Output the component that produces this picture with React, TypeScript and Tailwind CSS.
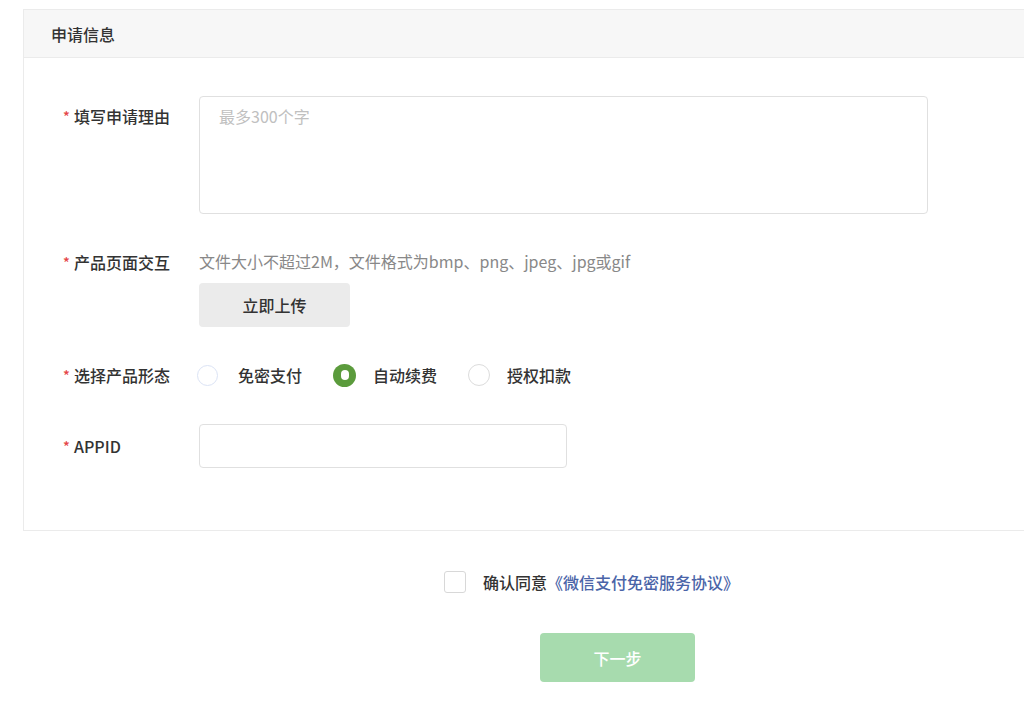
export default function App() {
  const font = { fontFamily: '"PingFang SC","Noto Sans CJK SC",sans-serif' };
  const Label = ({ t, top = 0 }: { t: string; top?: number }) => (
    <div className={`w-[175px] flex items-start text-[16px] text-[#333] leading-[24px] font-medium ${top ? "mt-[8px]" : ""}`}>
      <span className="text-[#e54545] w-[11px] pl-[39px] box-content text-[14px]">*</span>
      <span>{t}</span>
    </div>
  );
  return (
    <div className="w-[1024px] h-[702px] overflow-hidden bg-white" style={font}>
      <div className="ml-[23px] mt-[9px] w-[1020px] border border-[#ebebeb] h-[522px]">
        <div className="h-[48px] bg-[#f7f7f7] border-b border-[#ebebeb] flex items-center pl-[27px] text-[16px] text-[#333] font-medium">申请信息</div>
        <div className="flex pt-[38px] items-start">
          <Label t="填写申请理由" top={1} />
          <div className="w-[729px] h-[118px] border border-[#e0e0e0] rounded-[4px] px-[19px] pt-[7px] text-[16px] text-[#c0c0c0]">最多300个字</div>
        </div>
        <div className="flex pt-[36px] items-start">
          <Label t="产品页面交互" />
          <div>
            <div className="text-[16px] text-[#888] leading-[24px] -mt-[1px]">文件大小不超过2M，文件格式为bmp、png、jpeg、jpg或gif</div>
            <div className="mt-[10px] w-[151px] h-[44px] bg-[#ebebeb] rounded-[4px] flex items-center justify-center text-[16px] text-[#333] font-medium">立即上传</div>
          </div>
        </div>
        <div className="flex pt-[36px] items-center h-[60px]">
          <Label t="选择产品形态" />
          <div className="flex items-center text-[16px] text-[#333] font-medium">
            <span className="w-[21px] h-[21px] rounded-full border border-[#dbe3f5] -ml-[2px]"></span>
            <span className="ml-[20px]">免密支付</span>
            <span className="ml-[31px] w-[23px] h-[23px] rounded-full bg-[#5b9b3c] flex items-center justify-center"><span className="w-[8px] h-[10px] rounded-full bg-white"></span></span>
            <span className="ml-[17px]">自动续费</span>
            <span className="ml-[31px] w-[22px] h-[22px] rounded-full border border-[#dcdcdc]"></span>
            <span className="ml-[17px]">授权扣款</span>
          </div>
        </div>
        <div className="flex pt-[37px] items-center">
          <Label t="APPID" />
          <div className="w-[368px] h-[44px] border border-[#e0e0e0] rounded-[4px]"></div>
        </div>
      </div>
      <div className="flex items-center mt-[39px] ml-[444px] text-[16px] font-medium">
        <span className="w-[22px] h-[22px] border border-[#d8d8d8] rounded-[3px]"></span>
        <span className="ml-[17px] text-[#333]">确认同意</span>
        <span className="text-[#4a64a8]">《微信支付免密服务协议》</span>
      </div>
      <div className="ml-[540px] mt-[39px] w-[155px] h-[49px] rounded-[4px] bg-[#a7dbae] text-white text-[16px] font-medium flex items-center justify-center">下一步</div>
    </div>
  );
}
